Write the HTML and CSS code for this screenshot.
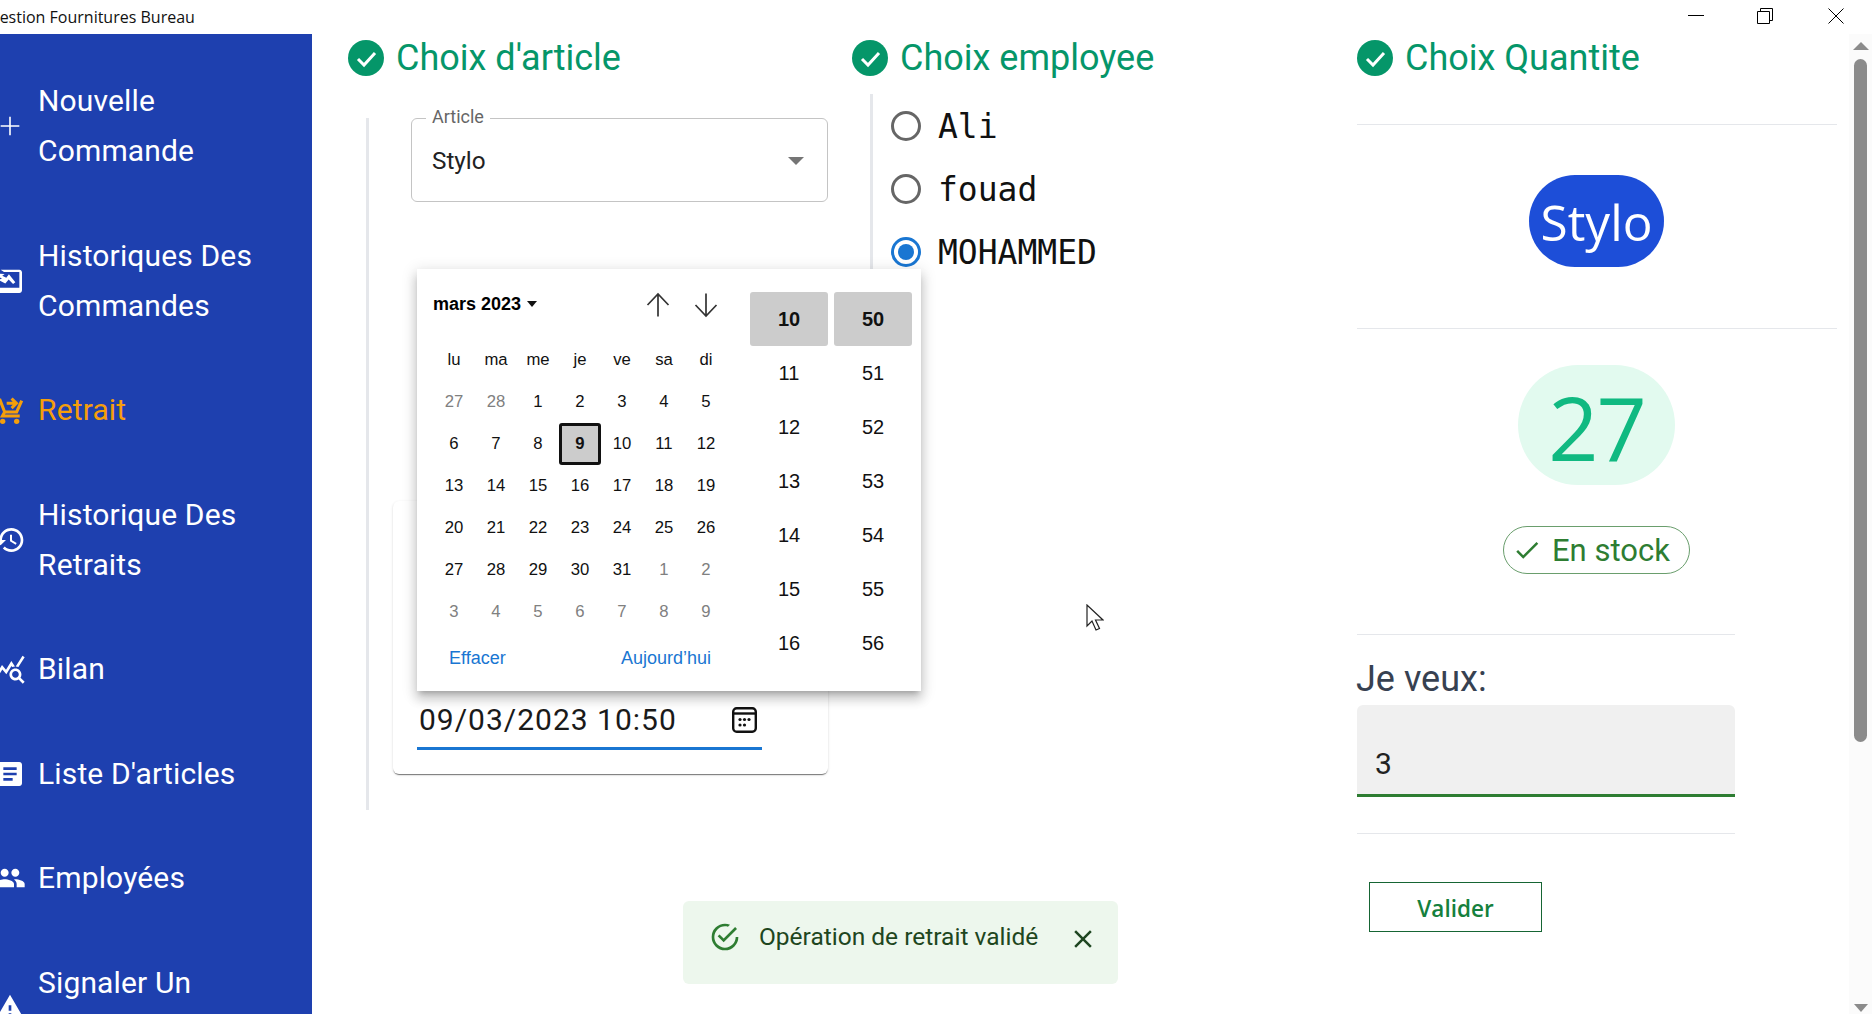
FILE: index.html
```html
<!DOCTYPE html>
<html lang="fr">
<head>
  <meta charset="UTF-8">
  <title>Gestion Fournitures Bureau</title>
  <link rel="stylesheet" href="styles.css">
</head>
<body>

  <header class="titlebar">
    <span class="titlebar-text">Gestion Fournitures Bureau</span>
    <div class="window-buttons">
      <svg class="win-btn" viewBox="0 0 16 16"><path d="M0 7.5h16"/></svg>
      <svg class="win-btn" viewBox="0 0 16 16"><path d="M.5 3.5h12v12H.5zM3.5 3.5V.5h12v12h-3"/></svg>
      <svg class="win-btn" viewBox="0 0 16 16"><path d="M.5.5l15 15M15.5.5l-15 15"/></svg>
    </div>
  </header>

  <div class="app">
    <nav class="sidebar">
      <a class="nav-item">
        <svg class="nav-icon" viewBox="0 0 24 24"><path d="M19 12.6h-6.4V19h-1.2v-6.4H5v-1.2h6.4V5h1.2v6.4H19z"/></svg>
        <span>Nouvelle<br>Commande</span>
      </a>
      <a class="nav-item">
        <svg class="nav-icon" viewBox="0 0 24 24"><path d="M5 3.500h14c1.100 0 2 .9 2 2v13.500c0 1.100-.9 2-2 2H5c-1.100 0-2-.9-2-2v-2h16V5.200H7.500zM3 6.500l5 .2-1.800 1.300 3 1.500 2-2.500 4.800 6-1.700 1.200-3.300-3.300-2.500 3L3 11l3 -.7L3 8.500z"/></svg>
        <span>Historiques Des<br>Commandes</span>
      </a>
      <a class="nav-item active">
        <svg class="nav-icon nav-icon-cart" viewBox="0 0 24 24">
          <path d="M1.500 4.500h3L8 13.500h9l3.800-8.500M8 13.500l-1.700 3h13M9.500 7h7M13.200 3.400 16.800 7l-3.600 3.600"/>
          <circle cx="6.500" cy="20.500" r="2"/><circle cx="17" cy="20.500" r="2"/>
        </svg>
        <span>Retrait</span>
      </a>
      <a class="nav-item">
        <svg class="nav-icon" viewBox="0 0 24 24"><path d="M13 3c-4.970 0-9 4.030-9 9H1l3.890 3.890.07.14L9 12H6c0-3.870 3.130-7 7-7s7 3.130 7 7-3.130 7-7 7c-1.930 0-3.680-.79-4.940-2.060l-1.420 1.420C8.270 19.990 10.510 21 13 21c4.970 0 9-4.030 9-9s-4.030-9-9-9zm-1 5v5l4.280 2.540.72-1.210-3.500-2.080V8H12z"/></svg>
        <span>Historique Des<br>Retraits</span>
      </a>
      <a class="nav-item">
        <svg class="nav-icon" viewBox="0 0 24 24"><path d="M19.880 18.470c.44-.7.7-1.510.7-2.390 0-2.490-2.010-4.500-4.500-4.500s-4.500 2.010-4.500 4.500 2.010 4.500 4.490 4.500c.88 0 1.700-.26 2.390-.7L21.580 23 23 21.580zM16.080 18.580c-1.380 0-2.500-1.120-2.500-2.500s1.120-2.500 2.500-2.500 2.500 1.120 2.500 2.500-1.120 2.500-2.500 2.500zM15.720 10.080c-.74.02-1.450.18-2.100.45l-.55-.83-3.800 6.180-3.010-3.520-3.630 5.810L1 17l5-8 3 3.500L13 6zM18.310 10.580c-.64-.28-1.330-.45-2.050-.49L21.380 2 23 3.180z"/></svg>
        <span>Bilan</span>
      </a>
      <a class="nav-item">
        <svg class="nav-icon" viewBox="0 0 24 24"><path d="M19 3H5c-1.100 0-2 .9-2 2v14c0 1.100.9 2 2 2h14c1.100 0 2-.9 2-2V5c0-1.100-.9-2-2-2zm-5 14H7v-2h7v2zm3-4H7v-2h10v2zm0-4H7V7h10v2z"/></svg>
        <span>Liste D'articles</span>
      </a>
      <a class="nav-item">
        <svg class="nav-icon" viewBox="0 0 24 24"><path d="M16 11c1.660 0 2.990-1.340 2.990-3S17.660 5 16 5c-1.660 0-3 1.340-3 3s1.340 3 3 3zm-8 0c1.660 0 2.990-1.340 2.990-3S9.660 5 8 5C6.340 5 5 6.340 5 8s1.340 3 3 3zm0 2c-2.330 0-7 1.170-7 3.500V19h14v-2.500c0-2.330-4.670-3.500-7-3.500zm8 0c-.29 0-.62.02-.97.05 1.160.84 1.970 1.970 1.970 3.450V19h6v-2.500c0-2.330-4.670-3.500-7-3.500z"/></svg>
        <span>Employées</span>
      </a>
      <a class="nav-item">
        <svg class="nav-icon" viewBox="0 0 24 24"><path d="M1 21h22L12 2 1 21zm12-3h-2v-2h2v2zm0-4h-2v-4h2v4z"/></svg>
        <span>Signaler Un<br>Problème</span>
      </a>
    </nav>

    <main class="content">
      <section class="colonne">
        <h2 class="step-title">
          <svg class="step-check" viewBox="0 0 36 36"><circle cx="18" cy="18" r="18"/><path d="M10 19l6 6 11-12"/></svg>
          Choix d'article
        </h2>
        <div class="step-body article-body">
          <div class="select-field">
            <span class="select-label">Article</span>
            <span class="select-value">Stylo</span>
            <span class="select-arrow"></span>
          </div>

          <div class="date-card">
            <div class="date-input">
              <span>09/03/2023 10:50</span>
              <svg class="cal-icon" viewBox="0 0 25 26"><rect x="1.200" y="1.200" width="22.600" height="23.600" rx="3.500"/><path d="M1 6.500h23"/><g class="cal-dots"><circle cx="8" cy="12.500" r="1.600"/><circle cx="12.500" cy="12.500" r="1.600"/><circle cx="17" cy="12.500" r="1.600"/><circle cx="8" cy="18" r="1.600"/><circle cx="12.500" cy="18" r="1.600"/></g></svg>
            </div>
          </div>

          <div class="picker">
            <div class="picker-cal">
              <div class="picker-head">
                <span class="picker-month">mars 2023 <i class="caret"></i></span>
                <svg class="picker-arrow" viewBox="0 0 24 24"><path d="M12 23.500V1M1.500 12 12 1l10.500 11"/></svg>
                <svg class="picker-arrow" viewBox="0 0 24 24"><path d="M12 .5V23M1.500 12 12 23l10.500-11"/></svg>
              </div>
              <div class="picker-grid" id="grille"></div>
              <div class="picker-foot">
                <span>Effacer</span>
                <span>Aujourd’hui</span>
              </div>
            </div>
            <div class="picker-times">
              <div class="time-col" id="heures"></div>
              <div class="time-col" id="minutes"></div>
            </div>
          </div>
        </div>
      </section>

      <section class="colonne colonne-employe">
        <h2 class="step-title">
          <svg class="step-check" viewBox="0 0 36 36"><circle cx="18" cy="18" r="18"/><path d="M10 19l6 6 11-12"/></svg>
          Choix employee
        </h2>
        <div class="step-body radio-body">
          <label class="radio-row"><span class="radio"></span><span class="radio-text">Ali</span></label>
          <label class="radio-row"><span class="radio"></span><span class="radio-text">fouad</span></label>
          <label class="radio-row"><span class="radio checked"></span><span class="radio-text">MOHAMMED</span></label>
        </div>
      </section>

      <section class="colonne quantite">
        <h2 class="step-title">
          <svg class="step-check" viewBox="0 0 36 36"><circle cx="18" cy="18" r="18"/><path d="M10 19l6 6 11-12"/></svg>
          Choix Quantite
        </h2>
        <div class="bloc bloc-article">
          <span class="pill-article">Stylo</span>
        </div>
        <div class="bloc bloc-stock">
          <span class="pill-stock">27</span>
          <span class="chip">
            <svg class="chip-icon" viewBox="0 0 24 24"><path d="M9 16.170 4.830 12l-1.420 1.410L9 19 21 7l-1.410-1.410z"/></svg>
            En stock
          </span>
        </div>
        <div class="bloc-form">
          <div class="form-label">Je veux:</div>
          <div class="form-input">3</div>
        </div>
        <div class="bloc-bouton">
          <button class="btn-valider">Valider</button>
        </div>
      </section>

      <div class="alert">
        <svg class="alert-icon" viewBox="0 0 24 24"><path d="M20 12a8 8 0 0 1-8 8 8 8 0 0 1-8-8 8 8 0 0 1 8-8c.76 0 1.500.11 2.200.31l1.570-1.570A10 10 0 0 0 12 2 10 10 0 0 0 2 12a10 10 0 0 0 10 10 10 10 0 0 0 10-10M7.910 10.080 6.500 11.500 11 16 21 6l-1.410-1.420L11 13.170z"/></svg>
        <span class="alert-text">Opération de retrait validé</span>
        <svg class="alert-close" viewBox="0 0 24 24"><path d="M19 6.410 17.590 5 12 10.590 6.410 5 5 6.410 10.590 12 5 17.590 6.410 19 12 13.410 17.590 19 19 17.590 13.410 12z"/></svg>
      </div>

      <svg class="curseur" viewBox="0 0 18 27"><path d="M1 1v21l5-5 4 9 3.500-1.500-4-8.500H17z"/></svg>
    </main>

    <div class="scrollbar">
      <i class="scroll-up"></i>
      <div class="scroll-track"><div class="scroll-thumb"></div></div>
      <i class="scroll-down"></i>
    </div>
  </div>

  <script>
    // grille du calendrier
    const jours = ['lu','ma','me','je','ve','sa','di'];
    const dates = [27,28,1,2,3,4,5,6,7,8,9,10,11,12,13,14,15,16,17,18,19,20,21,22,23,24,25,26,27,28,29,30,31,1,2,3,4,5,6,7,8,9];
    const grille = document.getElementById('grille');
    jours.forEach(function(j) {
      const c = document.createElement('span');
      c.className = 'cell';
      c.textContent = j;
      grille.appendChild(c);
    });
    dates.forEach(function(d, i) {
      const c = document.createElement('span');
      c.className = 'cell';
      if (i < 2 || i > 32) c.className += ' hors-mois';
      if (i === 10) c.className += ' today';
      c.textContent = d;
      grille.appendChild(c);
    });

    function remplir(id, debut) {
      const col = document.getElementById(id);
      for (let i = 0; i < 7; i++) {
        const t = document.createElement('span');
        t.className = i === 0 ? 'time selected' : 'time';
        t.textContent = debut + i;
        col.appendChild(t);
      }
    }
    remplir('heures', 10);
    remplir('minutes', 50);
  </script>

</body>
</html>
```

FILE: styles.css
```css
* {
  box-sizing: border-box;
}

html, body {
  height: 100%;
}

body {
  margin: 0;
  display: flex;
  flex-direction: column;
  overflow: hidden;
  background-color: #fff;
  font-family: Roboto, sans-serif;
  color: #111;
}

/* barre de titre */
.titlebar {
  height: 34px;
  flex: none;
  display: flex;
  align-items: center;
  justify-content: space-between;
  overflow: hidden;
}

.titlebar-text {
  margin-left: -12px;
  font-family: "Open Sans", sans-serif;
  font-size: 16px;
  color: #111;
}

.window-buttons {
  display: flex;
  gap: 54px;
  margin-right: 28px;
  margin-top: -2px;
}

.win-btn {
  width: 16px;
  height: 16px;
  fill: none;
  stroke: #000;
  stroke-width: 1;
}

.win-btn:nth-child(2) {
  position: relative;
  left: -1px;
}

.app {
  flex: 1;
  display: flex;
  min-height: 0;
}

/* menu */
.sidebar {
  width: 312px;
  flex: none;
  padding-top: 42px;
  display: flex;
  flex-direction: column;
  gap: 54.500px;
  overflow: hidden;
  background-color: #1e40af;
  color: #fff;
}

.nav-item {
  display: flex;
  align-items: center;
  font-size: 30px;
  line-height: 50px;
  letter-spacing: .15px;
  flex: none;
}

.nav-icon {
  width: 32px;
  height: 32px;
  flex: none;
  margin-left: -6px;
  margin-right: 12px;
  fill: currentColor;
}

.nav-icon-cart path {
  fill: none;
  stroke: currentColor;
  stroke-width: 2.300;
}

.nav-item.active {
  color: #f59e0b;
}

/* contenu */
.content {
  position: relative;
  flex: 1;
  display: flex;
  padding: 6px 0 0 36px;
  min-width: 0;
}

.colonne {
  width: 504px;
  flex: none;
  position: relative;
}

.colonne-employe {
  width: 505px;
}

.quantite {
  width: 480px;
}

.step-title {
  display: flex;
  align-items: center;
  gap: 12px;
  height: 36px;
  margin: 0;
  font-size: 36px;
  font-weight: 400;
  line-height: 34px;
  color: #059669;
  white-space: nowrap;
}

.step-check {
  width: 36px;
  height: 36px;
  flex: none;
}

.step-check circle {
  fill: #059669;
}

.step-check path {
  fill: none;
  stroke: #fff;
  stroke-width: 3;
}

.step-body {
  margin-left: 18px;
  border-left: 3px solid #e5e7eb;
}

.article-body {
  position: relative;
  margin-top: 42px;
  height: 692px;
  display: flex;
  flex-direction: column;
}

.select-field {
  position: relative;
  width: 417px;
  height: 84px;
  margin-left: 42px;
  padding: 0 0 0 20px;
  border: 1.500px solid #c4c4c4;
  border-radius: 6px;
  display: flex;
  align-items: center;
}

.select-label {
  position: absolute;
  top: -12px;
  left: 14px;
  padding: 0 6px;
  background-color: #fff;
  font-size: 18px;
  line-height: 20px;
  color: #666;
}

.select-value {
  font-size: 24.300px;
  color: #222;
}

.select-arrow {
  position: absolute;
  right: 23px;
  top: 38px;
  border-left: 8px solid transparent;
  border-right: 8px solid transparent;
  border-top: 8px solid #757575;
}

.date-card {
  width: 435px;
  height: 273px;
  margin-left: 24px;
  margin-top: 299px;
  padding: 0 24px 24px 24px;
  background-color: #fff;
  border-radius: 6px;
  box-shadow: 0 2px 1px -1px rgba(0,0,0,.4), 0 1px 1px 0 rgba(0,0,0,.14), 0 1px 3px 0 rgba(0,0,0,.12);
  display: flex;
  flex-direction: column;
  justify-content: flex-end;
}

.date-input {
  width: 345px;
  height: 48px;
  padding: 1px 5px 0 2px;
  border-bottom: 3px solid #1976d2;
  display: flex;
  align-items: flex-start;
  justify-content: space-between;
  font-size: 30px;
  line-height: 34px;
  letter-spacing: 1px;
  color: #1a1a1a;
}

.cal-icon {
  width: 25px;
  height: 26px;
  margin-top: 4px;
  fill: none;
  stroke: #111;
  stroke-width: 2.400;
}

.cal-dots circle {
  fill: #111;
  stroke: none;
}

/* calendrier */
.picker {
  position: absolute;
  left: 48px;
  top: 151px;
  width: 504px;
  height: 422px;
  padding: 23px 9px 0 16px;
  display: flex;
  background-color: #fff;
  box-shadow: 0 5px 5px -3px rgba(0,0,0,.2), 0 8px 10px 1px rgba(0,0,0,.14), 0 3px 14px 2px rgba(0,0,0,.12);
  font-family: "Liberation Sans", Arial, sans-serif;
  font-size: 16.700px;
  color: #111;
  z-index: 5;
}

.picker-cal {
  width: 317px;
  flex: none;
}

.picker-head {
  display: flex;
  align-items: center;
  gap: 24px;
  height: 24px;
  margin-bottom: 22.500px;
  padding-right: 32px;
}

.picker-month {
  font-size: 18px;
  font-weight: 700;
  color: #000;
  flex: 1;
  white-space: nowrap;
}

.caret {
  display: inline-block;
  margin-left: 1px;
  vertical-align: 3px;
  border-left: 5.500px solid transparent;
  border-right: 5.500px solid transparent;
  border-top: 6px solid #111;
}

.picker-arrow {
  width: 24px;
  height: 26px;
  margin-top: 2px;
  fill: none;
  stroke: #333;
  stroke-width: 1.700;
}

.picker-grid {
  display: grid;
  grid-template-columns: repeat(7, 42px);
  grid-auto-rows: 42px;
  width: 294px;
}

.cell {
  display: flex;
  align-items: center;
  justify-content: center;
}

.hors-mois {
  color: #808080;
}

.today {
  background-color: #ccc;
  border: 3px solid #111;
  border-radius: 3px;
  font-weight: 700;
}

.picker-foot {
  display: flex;
  justify-content: space-between;
  width: 262px;
  margin-left: 16px;
  margin-top: 15px;
  font-size: 18px;
  color: #1976d2;
}

.picker-times {
  display: flex;
  gap: 6px;
}

.time-col {
  width: 78px;
  display: flex;
  flex-direction: column;
}

.time {
  height: 54px;
  display: flex;
  align-items: center;
  justify-content: center;
  font-size: 20px;
}

.selected {
  background-color: #ccc;
  border-radius: 3px;
  font-weight: 700;
}

/* employes */
.radio-body {
  margin-top: 18px;
  height: 196px;
  padding: 0 0 0 18px;
  display: flex;
  flex-direction: column;
}

.radio-row {
  display: flex;
  align-items: center;
  gap: 17px;
  height: 63px;
  font-family: "DejaVu Sans Mono", monospace;
  font-size: 33px;
  color: #111;
}

.radio-text {
  position: relative;
  top: 1px;
}

.radio {
  width: 30px;
  height: 30px;
  flex: none;
  border: 3px solid #666;
  border-radius: 50%;
  display: flex;
  align-items: center;
  justify-content: center;
}

.radio.checked {
  border-color: #1976d2;
}

.radio.checked::after {
  content: "";
  width: 16px;
  height: 16px;
  border-radius: 50%;
  background-color: #1976d2;
}

/* quantite */
.bloc {
  border-top: 1px solid #e5e7eb;
  display: flex;
  flex-direction: column;
  align-items: center;
  padding-right: 1px;
}

.bloc-article {
  margin-top: 48px;
  height: 204px;
  padding-top: 50px;
}

.pill-article {
  width: 135px;
  height: 92px;
  border-radius: 46px;
  background-color: #1d4ed8;
  color: #fff;
  font-family: "Open Sans", sans-serif;
  font-size: 49.500px;
  line-height: 94px;
  text-align: center;
}

.bloc-stock {
  height: 306px;
  padding-top: 36px;
}

.pill-stock {
  width: 157px;
  height: 120px;
  border-radius: 60px;
  background-color: #e2faef;
  color: #10b981;
  font-family: "Open Sans", sans-serif;
  font-size: 88px;
  line-height: 124px;
  letter-spacing: -2px;
  text-align: center;
}

.chip {
  margin-top: 41px;
  height: 48px;
  width: 187px;
  border: 1px solid #6a9e6d;
  border-radius: 24px;
  display: flex;
  align-items: center;
  gap: 10px;
  padding-left: 8px;
  font-size: 31px;
  color: #2e7d32;
}

.chip-icon {
  width: 30px;
  height: 30px;
  fill: currentColor;
}

.bloc-form {
  width: 378px;
  height: 200px;
  border-top: 1px solid #e5e7eb;
  border-bottom: 1px solid #e5e7eb;
  padding-top: 24px;
}

.form-label {
  font-size: 36px;
  line-height: 40px;
  color: #374151;
  margin-left: -1px;
}

.form-input {
  height: 92px;
  margin-top: 6px;
  padding: 42px 0 0 18px;
  background-color: #f0f0f0;
  border-bottom: 3px solid #2e7d32;
  border-radius: 6px 6px 0 0;
  font-size: 30px;
  line-height: 34px;
  color: #222;
}

.bloc-bouton {
  padding: 48px 0 0 12px;
}

.btn-valider {
  width: 173px;
  height: 50px;
  padding-top: 3px;
  border: 1.500px solid #166534;
  background-color: #fff;
  font-family: "Open Sans", sans-serif;
  font-size: 22.500px;
  font-weight: 600;
  color: #15803d;
}

/* notification */
.alert {
  position: absolute;
  left: 371px;
  top: 867px;
  width: 435px;
  height: 83px;
  padding: 20px 22px 0 26px;
  display: flex;
  align-items: flex-start;
  background-color: #edf7ed;
  border-radius: 6px;
  color: #1e4620;
}

.alert-icon {
  width: 32px;
  height: 32px;
  flex: none;
  fill: #2e7d32;
}

.alert-text {
  margin-left: 18px;
  font-size: 24.500px;
  line-height: 32px;
  white-space: nowrap;
}

.alert-close {
  width: 30px;
  height: 30px;
  margin-left: 30px;
  margin-top: 3px;
  flex: none;
  fill: #1e4620;
}

.curseur {
  position: absolute;
  left: 774px;
  top: 570px;
  width: 18px;
  height: 27px;
  fill: #fff;
  stroke: #222;
  stroke-width: 1.200;
  z-index: 10;
}

/* ascenseur */
.scrollbar {
  width: 23px;
  flex: none;
  display: flex;
  flex-direction: column;
  align-items: center;
  background-color: #fbfbfb;
  padding: 8px 0 2px 0;
}

.scroll-up {
  border-left: 8px solid transparent;
  border-right: 8px solid transparent;
  border-bottom: 8px solid #8b8b8b;
}

.scroll-down {
  border-left: 7px solid transparent;
  border-right: 7px solid transparent;
  border-top: 8px solid #8b8b8b;
}

.scroll-track {
  flex: 1;
  width: 100%;
  padding: 9px 5px 0 5px;
}

.scroll-thumb {
  height: 683px;
  background-color: #8b8b8b;
  border-radius: 7px;
}
```
